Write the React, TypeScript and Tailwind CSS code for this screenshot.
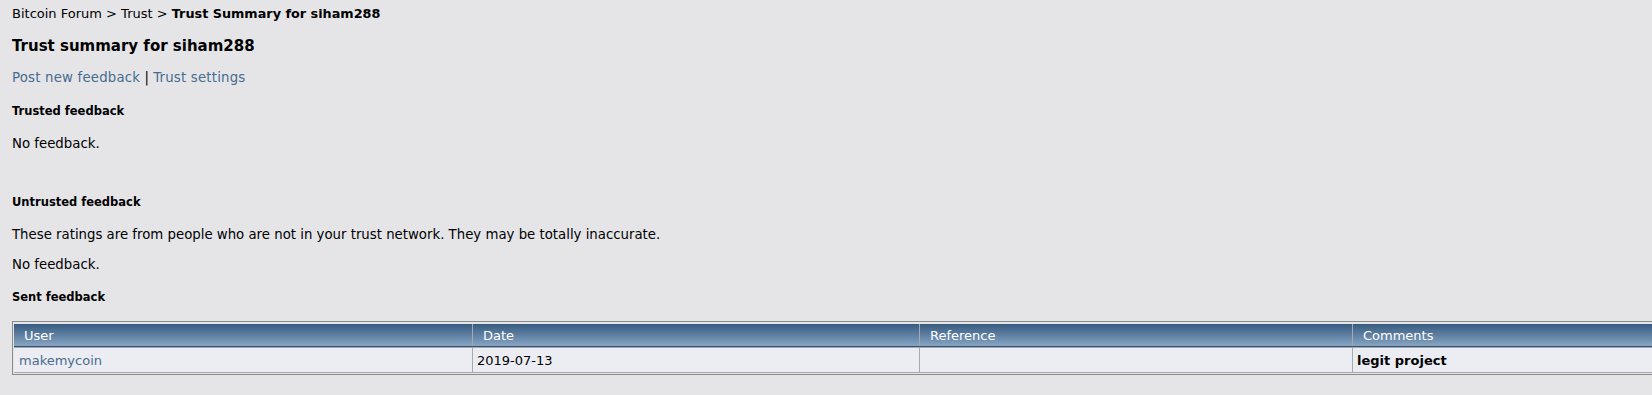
import React from 'react';

const font = "font-['DejaVu_Sans',Verdana,sans-serif]";

const App: React.FC = () => {
  return (
    <div className={`w-[1652px] h-[395px] overflow-hidden bg-[#E5E5E8] text-black ${font}`}>
      <div className="w-[1800px] px-[12px] pt-[6px]">
        {/* breadcrumb */}
        <div className="text-[13px] leading-[16px]">
          <a href="#" className="text-black">Bitcoin Forum</a> &gt;{' '}
          <a href="#" className="text-black">Trust</a> &gt;{' '}
          <b className="text-[12.8px]">Trust Summary for siham288</b>
        </div>

        <h3 className="mt-[14px] text-[15px] leading-[20px] font-bold">Trust summary for siham288</h3>

        <div className="mt-[14px] text-[13.3px] leading-[16px]">
          <a href="#" className="text-[#476C8E] tracking-[0.2px]">Post new feedback</a> |{' '}
          <a href="#" className="text-[#476C8E] tracking-[0.2px]">Trust settings</a>
        </div>

        <h4 className="mt-[18px] text-[11.5px] leading-[14px] font-bold">Trusted feedback</h4>
        <p className="mt-[18px] text-[13.3px] leading-[16px]">No feedback.</p>

        <h4 className="mt-[43px] text-[11.5px] leading-[14px] font-bold">Untrusted feedback</h4>
        <p className="mt-[18px] text-[13.3px] leading-[16px]">
          These ratings are from people who are not in your trust network. They may be totally inaccurate.
        </p>
        <p className="mt-[14px] text-[13.3px] leading-[16px]">No feedback.</p>

        <h4 className="mt-[17px] text-[11.5px] leading-[14px] font-bold">Sent feedback</h4>

        {/* sent feedback table */}
        <div className="mt-[17px] border border-[#8a8a8a] pt-[2px] pl-px pb-px text-[13px]">
          <div className="flex h-[23px] bg-linear-to-b from-[#365b80] to-[#88a5c3] border-b border-[#2c5274] text-white">
            <div className="w-[459px] border-r border-[#a9a9a9] pl-[10px] pt-px leading-[22px]">User</div>
            <div className="w-[447px] border-r border-[#a9a9a9] pl-[10px] pt-px leading-[22px]">Date</div>
            <div className="w-[433px] border-r border-[#a9a9a9] pl-[10px] pt-px leading-[22px]">Reference</div>
            <div className="flex-1 pl-[10px] pt-px leading-[22px]">Comments</div>
          </div>
          <div className="h-px bg-[#a9a9a9]" />
          <div className="flex h-[25px] bg-[#ECEDF3] border-b border-[#a9a9a9]">
            <div className="w-[459px] border-r border-[#a9a9a9] pl-[5px] pt-px leading-[24px]">
              <a href="#" className="text-[#476C8E]">makemycoin</a>
            </div>
            <div className="w-[447px] border-r border-[#a9a9a9] pl-[4px] pt-px leading-[24px]">2019-07-13</div>
            <div className="w-[433px] border-r border-[#a9a9a9] leading-[24px]"></div>
            <div className="flex-1 pl-[4px] pt-px leading-[24px] font-bold">legit project</div>
          </div>
        </div>
      </div>
    </div>
  );
};

export default App;
